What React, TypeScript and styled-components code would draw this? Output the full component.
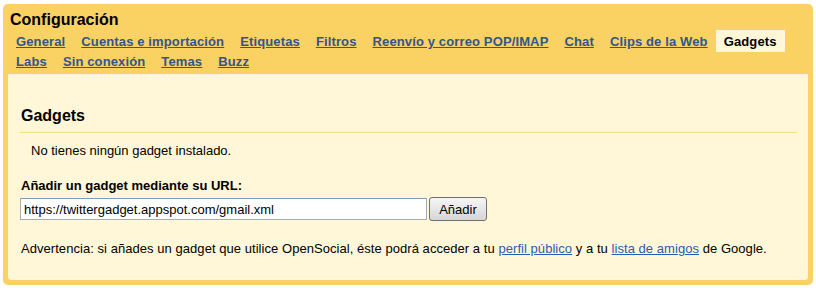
import React from 'react';
import styled, { createGlobalStyle } from 'styled-components';

const GlobalStyle = createGlobalStyle`
  html, body {
    margin: 0;
    padding: 0;
    background: #fff;
  }
  body {
    font-family: "Liberation Sans", Arial, sans-serif;
    font-size: 13px;
    color: #000;
  }
`;

const Frame = styled.div`
  margin: 4px 3px 0 3px;
  width: 800px;
  padding: 0 5px 5px 5px;
  background: #fad163;
  border-radius: 5px;
`;

const Title = styled.h1`
  margin: 0;
  padding: 7px 0 1px 2px;
  font-size: 16px;
  line-height: 18px;
  font-weight: bold;
`;

const TabBar = styled.nav`
  display: flex;
  flex-wrap: wrap;
`;

const Tab = styled.a<{ $active?: boolean }>`
  display: block;
  padding: 4px 8px 2px 8px;
  margin-bottom: -2px;
  line-height: 16px;
  font-size: 13px;
  font-weight: bold;
  letter-spacing: 0.13px;
  cursor: pointer;
  color: ${({ $active }) => ($active ? '#000' : '#34548c')};
  text-decoration: ${({ $active }) => ($active ? 'none' : 'underline')};
  background: ${({ $active }) => ($active ? '#fff7d7' : 'transparent')};
`;

const Panel = styled.section`
  margin-top: 4px;
  padding: 32px 11px 23px 12px;
  background: #fff7d7;
  border-radius: 0 0 3px 3px;
`;

const Heading = styled.h2`
  margin: 0;
  padding: 0 0 6px 1px;
  font-size: 16px;
  line-height: 20px;
  font-weight: bold;
  border-bottom: 1px solid #f4df80;
`;

const Message = styled.p`
  margin: 10px 0 0 11px;
  line-height: 16px;
`;

const Label = styled.label`
  display: block;
  margin: 19px 0 0 1px;
  line-height: 16px;
  font-weight: bold;
`;

const UrlRow = styled.div`
  display: flex;
  align-items: flex-start;
  gap: 2px;
  margin-top: 3px;
`;

const UrlInput = styled.input`
  box-sizing: border-box;
  width: 407px;
  height: 22px;
  margin-top: 1px;
  padding: 0 3px;
  border: 1px solid #a5acb2;
  border-top-color: #7f9db9;
  background: #fff;
  font-family: "Liberation Sans", Arial, sans-serif;
  font-size: 13px;
  color: #000;
  outline: none;
`;

const Button = styled.button`
  box-sizing: border-box;
  width: 58px;
  height: 24px;
  padding: 0;
  border: 1px solid #707070;
  border-radius: 3px;
  background: linear-gradient(#f6f6f6, #e6e6e6 50%, #d6d6d6);
  font-family: "Liberation Sans", Arial, sans-serif;
  font-size: 13px;
  color: #000;
`;

const Warning = styled.p`
  margin: 20px 0 0 1px;
  line-height: 16px;
  letter-spacing: 0.05px;
`;

const Link = styled.a`
  color: #2a5db0;
  text-decoration: underline;
  cursor: pointer;
`;

const tabs = [
  'General',
  'Cuentas e importación',
  'Etiquetas',
  'Filtros',
  'Reenvío y correo POP/IMAP',
  'Chat',
  'Clips de la Web',
  'Gadgets',
  'Labs',
  'Sin conexión',
  'Temas',
  'Buzz',
];

export default function App() {
  return (
    <>
      <GlobalStyle />
      <Frame>
        <Title>Configuración</Title>
        <TabBar>
          {tabs.map((t) => (
            <Tab key={t} $active={t === 'Gadgets'}>
              {t}
            </Tab>
          ))}
        </TabBar>
        <Panel>
          <Heading>Gadgets</Heading>
          <Message>No tienes ningún gadget instalado.</Message>
          <Label htmlFor="gadget-url">Añadir un gadget mediante su URL:</Label>
          <UrlRow>
            <UrlInput id="gadget-url" defaultValue="https://twittergadget.appspot.com/gmail.xml" />
            <Button>Añadir</Button>
          </UrlRow>
          <Warning>
            Advertencia: si añades un gadget que utilice OpenSocial, éste podrá acceder a tu{' '}
            <Link>perfil público</Link> y a tu <Link>lista de amigos</Link> de Google.
          </Warning>
        </Panel>
      </Frame>
    </>
  );
}
